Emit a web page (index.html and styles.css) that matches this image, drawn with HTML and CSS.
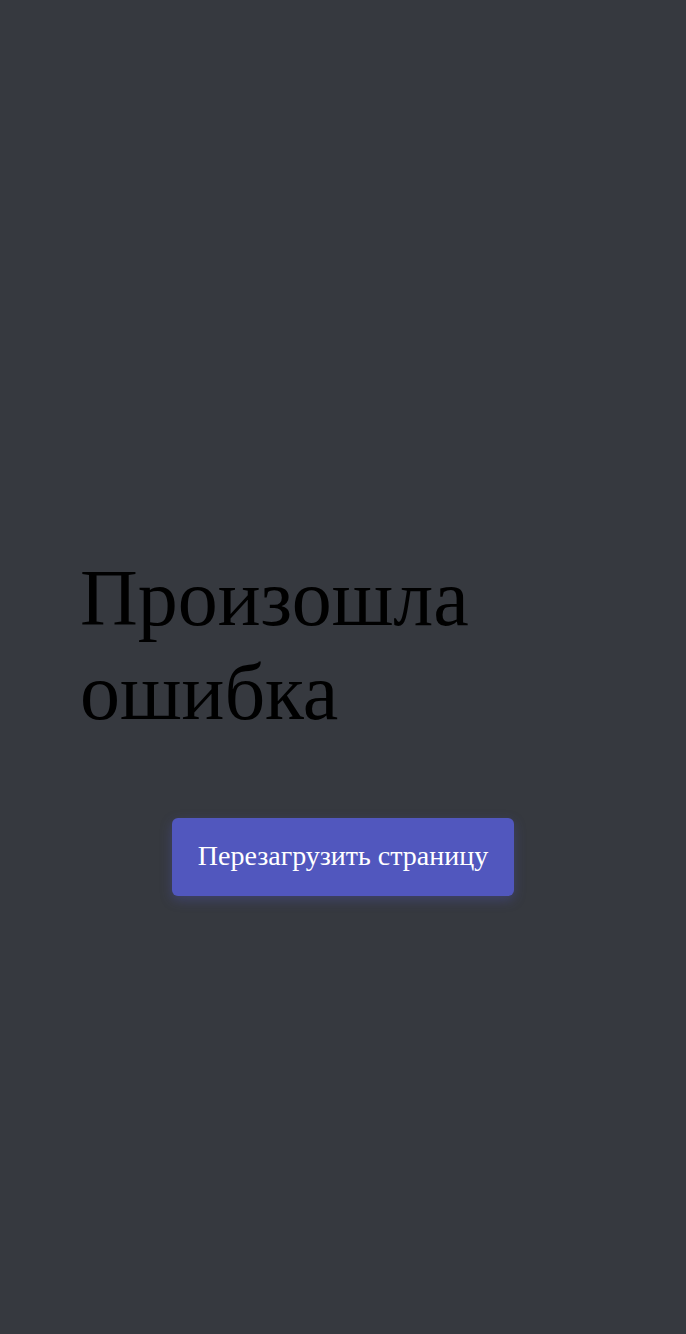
FILE: index.html
```html
<!DOCTYPE html>
<html lang="ru">
<head>
<meta charset="utf-8">
<title>Ошибка</title>
<link rel="stylesheet" href="styles.css">
</head>
<body>
<main class="error-page">
  <h1 class="error-title">Произошла ошибка</h1>
  <button class="reload-btn" type="button">Перезагрузить страницу</button>
</main>
</body>
</html>
```
FILE: styles.css
```css
html, body {
  margin: 0;
  padding: 0;
  background: #36393f;
}
body {
  font-family: "Liberation Serif", "Times New Roman", serif;
}
.error-page {
  box-sizing: border-box;
  min-height: 100vh;
  display: flex;
  flex-direction: column;
  justify-content: center;
  padding: 112px 80px 0;
}
.error-title {
  margin: 0 0 79px;
  font-size: 80px;
  font-weight: 400;
  line-height: 94px;
  color: #000;
}
.reload-btn {
  align-self: center;
  font-family: "Liberation Serif", "Times New Roman", serif;
  font-size: 28px;
  line-height: 32px;
  color: #fff;
  background: #5157be;
  border: none;
  border-radius: 6px;
  padding: 22px 26px 24px;
  box-shadow: 0 4px 12px rgba(81, 87, 190, 0.35);
  cursor: pointer;
}
```
